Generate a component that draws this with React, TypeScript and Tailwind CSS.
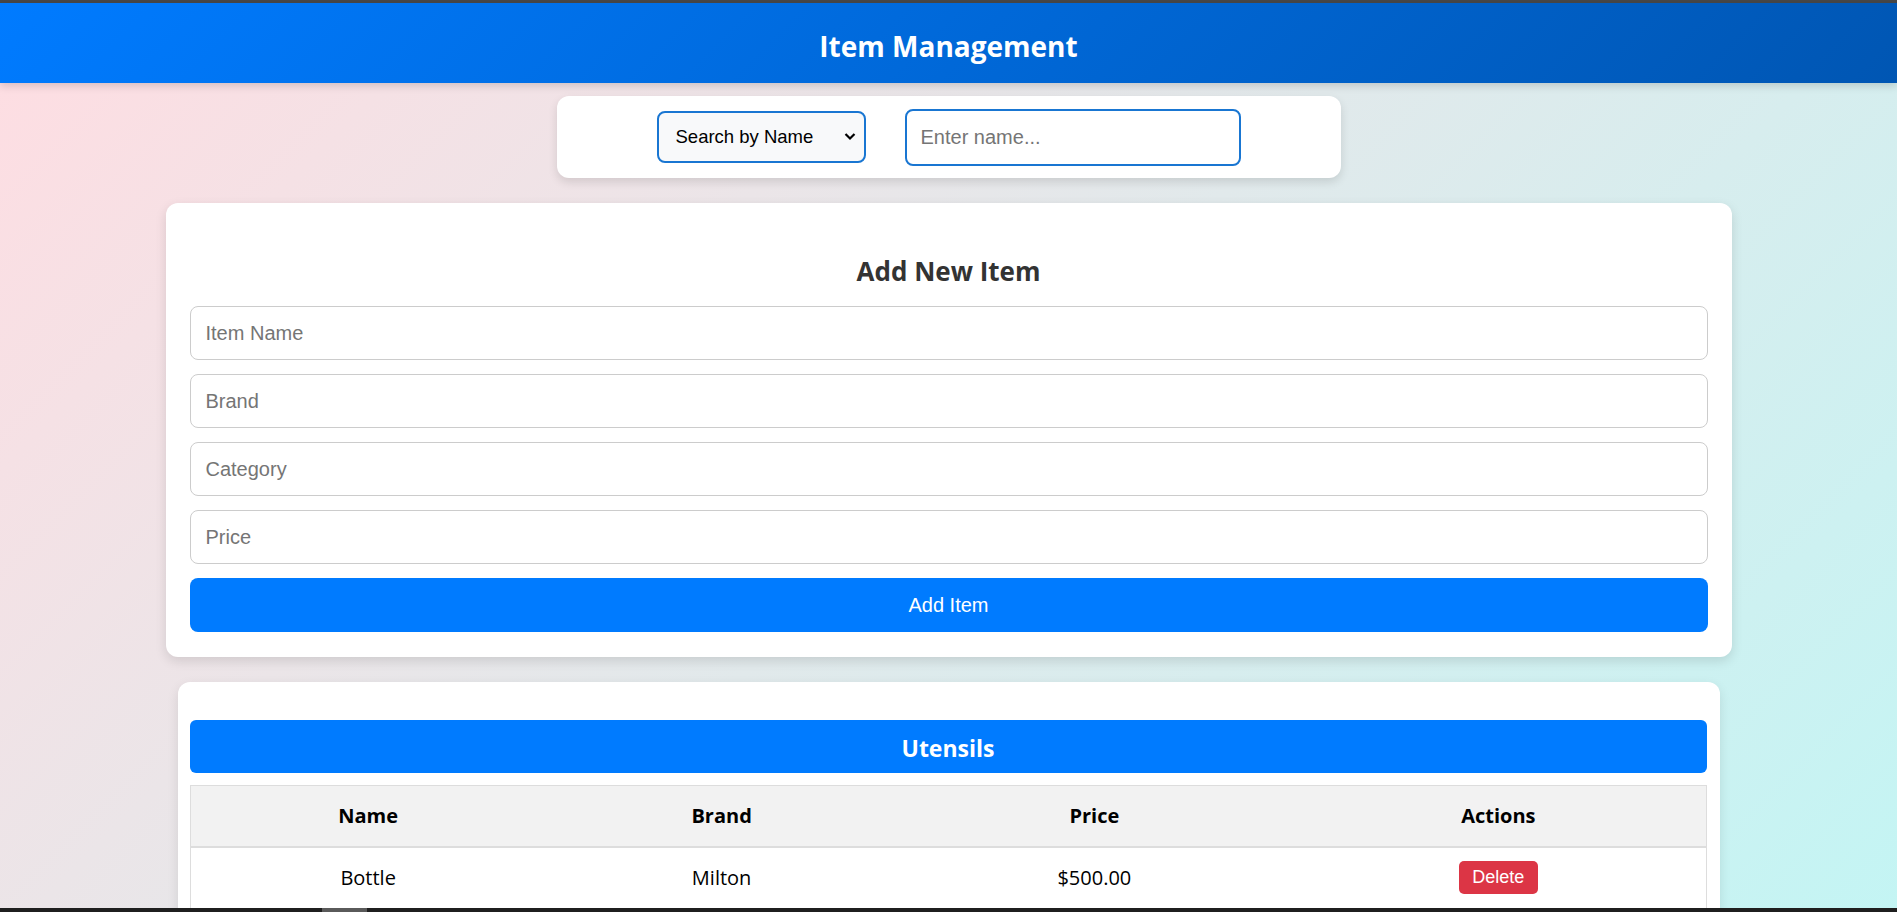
import React from "react";

const segoe = { fontFamily: '"Open Sans", "Noto Sans", sans-serif' };

export default function App() {
  return (
    <div className="relative min-h-screen w-full bg-[linear-gradient(135deg,#ffdde2_0%,#c3f5f4_100%)] font-['Liberation_Sans',Arial,sans-serif]">
      <div className="h-[3px] bg-[#474747]" />
      <header className="flex h-[80px] items-center justify-center bg-[linear-gradient(135deg,#007bff,#0056b3)] shadow-[0_3px_8px_rgba(0,0,0,0.15)]">
        <h1 className="pt-[6px] text-[28px] font-bold text-white" style={segoe}>
          Item Management
        </h1>
      </header>

      <div className="flex flex-col items-center">
        <div className="mt-[13px] flex h-[82px] w-[784px] items-center justify-center gap-[39px] rounded-[12px] bg-white shadow-[0_4px_10px_rgba(0,0,0,0.12)]">
          <div className="relative">
            <select className="h-[52px] w-[209px] appearance-none rounded-[8px] border-2 border-[#1976d2] bg-[#f8f9fa] pl-[17px] text-[18.5px] text-black outline-none">
              <option>Search by Name</option>
            </select>
            <svg className="pointer-events-none absolute right-[10px] top-[21px]" width="12" height="9" viewBox="0 0 12 9">
              <path d="M1.5 2 L6 6.5 L10.5 2" fill="none" stroke="#000" strokeWidth="2.2" />
            </svg>
          </div>
          <input
            className="h-[57px] w-[336px] rounded-[8px] border-2 border-[#1976d2] bg-white px-[14px] text-[20px] placeholder:text-[#757575] outline-none"
            placeholder="Enter name..."
          />
        </div>

        <div className="mt-[25px] w-[1566px] rounded-[12px] bg-white px-[24px] pb-[25px] pt-[48px] shadow-[0_4px_12px_rgba(0,0,0,0.12)]">
          <h2 className="mb-[15px] text-center text-[26px] font-bold leading-[40px] text-[#333]" style={segoe}>
            Add New Item
          </h2>
          <div className="flex flex-col gap-[14px]">
            {["Item Name", "Brand", "Category", "Price"].map((p) => (
              <input
                key={p}
                className="h-[54px] w-full rounded-[8px] border border-[#cccccc] bg-white px-[15px] text-[20px] placeholder:text-[#757575] outline-none"
                placeholder={p}
              />
            ))}
            <button className="h-[54px] w-full rounded-[8px] bg-[#007bff] text-[20px] text-white">Add Item</button>
          </div>
        </div>

        <div className="mt-[25px] w-[1542px] rounded-[12px] bg-white pl-[12px] pr-[13px] pt-[38px] pb-[30px] shadow-[0_4px_12px_rgba(0,0,0,0.1)]">
          <div className="flex h-[53px] items-center justify-center rounded-[6px] bg-[#007bff] pt-[3px]">
            <span className="text-[23px] font-bold text-white" style={segoe}>
              Utensils
            </span>
          </div>
          <table className="mt-[12px] w-full border-collapse border border-[#dddddd] text-[20px] text-black" style={segoe}>
            <colgroup>
              <col className="w-[356px]" />
              <col className="w-[352px]" />
              <col className="w-[394px]" />
              <col className="w-[415px]" />
            </colgroup>
            <thead>
              <tr className="h-[61px] border-b-2 border-[#dddddd] bg-[#f2f2f2]">
                <th className="font-bold">Name</th>
                <th className="font-bold">Brand</th>
                <th className="font-bold">Price</th>
                <th className="font-bold">Actions</th>
              </tr>
            </thead>
            <tbody>
              <tr className="h-[62px] border-b border-[#dddddd]">
                <td className="text-center">Bottle</td>
                <td className="text-center">Milton</td>
                <td className="text-center">$500.00</td>
                <td className="text-center">
                  <button className="h-[33px] w-[79px] rounded-[5px] bg-[#dc3545] text-[18px] text-white font-['Liberation_Sans',Arial,sans-serif]">
                    Delete
                  </button>
                </td>
              </tr>
            </tbody>
          </table>
        </div>
      </div>

      <div className="fixed bottom-0 left-0 flex h-[4px] w-full bg-[#1f1f1f]">
        <div className="ml-[322px] h-full w-[45px] bg-[#5a5a5a]" />
      </div>
    </div>
  );
}
